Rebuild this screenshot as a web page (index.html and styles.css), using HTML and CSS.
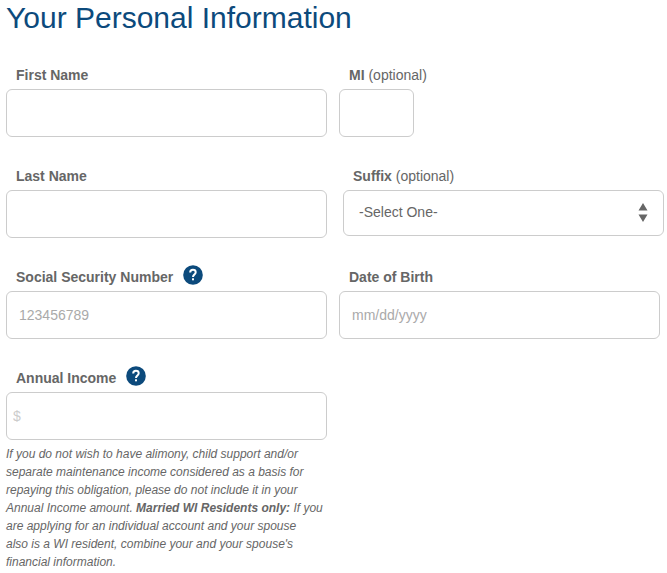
FILE: index.html
```html
<!DOCTYPE html>
<html lang="en">
<head>
    <meta charset="UTF-8">
    <meta name="viewport" content="width=device-width, initial-scale=1.0">
    <title>Your Personal Information</title>
    <link rel="stylesheet" href="styles.css">
</head>
<body>
    <h1>Your Personal Information</h1>

    <form class="form-grid">
        <div class="field">
            <div class="field-label">
                <label for="firstName">First Name</label>
            </div>
            <input type="text" id="firstName">
        </div>

        <div class="field">
            <div class="field-label">
                <label for="middleInitial">MI <span class="optional">(optional)</span></label>
            </div>
            <input type="text" id="middleInitial" class="input-short" maxlength="1">
        </div>

        <div class="field">
            <div class="field-label">
                <label for="lastName">Last Name</label>
            </div>
            <input type="text" id="lastName">
        </div>

        <div class="field field-select">
            <div class="field-label">
                <label for="suffix">Suffix <span class="optional">(optional)</span></label>
            </div>
            <div class="select-wrap">
                <select id="suffix">
                    <option>-Select One-</option>
                    <option>Jr.</option>
                    <option>Sr.</option>
                    <option>II</option>
                    <option>III</option>
                </select>
                <svg class="select-arrows" viewBox="0 0 10 20" aria-hidden="true">
                    <path d="M5 0L9.5 7.5H0.5Z M0.5 11.5H9.5L5 19Z"/>
                </svg>
            </div>
        </div>

        <div class="field">
            <div class="field-label">
                <label for="ssn">Social Security Number</label>
                <button type="button" class="help" aria-label="Help with Social Security Number">
                    <svg viewBox="0 0 20 20" aria-hidden="true">
                        <circle cx="10" cy="10" r="9.8"/>
                        <path d="M7.2 7.4C7.2 5.6 8.3 4.8 9.9 4.8C11.5 4.8 12.7 5.6 12.7 7.2C12.7 9.4 10 9.6 10 12"/>
                        <rect x="9" y="13.3" width="2" height="2"/>
                    </svg>
                </button>
            </div>
            <input type="text" id="ssn" placeholder="123456789">
        </div>

        <div class="field">
            <div class="field-label">
                <label for="birthDate">Date of Birth</label>
            </div>
            <input type="text" id="birthDate" placeholder="mm/dd/yyyy">
        </div>

        <div class="field">
            <div class="field-label">
                <label for="income">Annual Income</label>
                <button type="button" class="help" aria-label="Help with Annual Income">
                    <svg viewBox="0 0 20 20" aria-hidden="true">
                        <circle cx="10" cy="10" r="9.8"/>
                        <path d="M7.2 7.4C7.2 5.6 8.3 4.8 9.9 4.8C11.5 4.8 12.7 5.6 12.7 7.2C12.7 9.4 10 9.6 10 12"/>
                        <rect x="9" y="13.3" width="2" height="2"/>
                    </svg>
                </button>
            </div>
            <input type="text" id="income" class="input-money" placeholder="$" aria-describedby="incomeNote">
            <p class="note" id="incomeNote">If you do not wish to have alimony, child support and/or separate maintenance income considered as a basis for repaying this obligation, please do not include it in your Annual Income amount. <strong>Married WI Residents only:</strong> If you are applying for an individual account and your spouse<br> also is a WI resident, combine your and your spouse's<br> financial information.</p>
        </div>
    </form>
</body>
</html>
```

FILE: styles.css
```css
* {
    box-sizing: border-box;
}
body {
    margin: 0;
    padding: 0 7px 0 6px;
    font-family: "Liberation Sans", Arial, sans-serif;
    font-size: 14px;
    color: #666;
    background-color: #fff;
}
h1 {
    margin: 0 0 29px;
    font-size: 30px;
    font-weight: normal;
    line-height: 36px;
    color: #0c4a7c;
}
.form-grid {
    display: grid;
    grid-template-columns: 1fr 1fr;
    gap: 29px 12px;
}
.field-label {
    display: flex;
    align-items: center;
    gap: 10px;
    height: 20px;
    margin-bottom: 4px;
    padding-left: 10px;
    line-height: 20px;
}
label {
    font-weight: bold;
}
.optional {
    font-weight: normal;
}
input,
select {
    display: block;
    width: 100%;
    height: 48px;
    padding: 0 12px;
    border: 1px solid #ccc;
    border-radius: 6px;
    background-color: #fff;
    font-family: inherit;
    font-size: 14px;
    color: #666;
}
input::placeholder {
    color: #aaa;
    opacity: 1;
}
.input-short {
    width: 75px;
}
.input-money {
    padding-left: 6px;
}
.input-money::placeholder {
    color: #ccc;
}
/* the drop-down sits slightly right of the text boxes */
.field-select {
    margin: 0 -4px 0 4px;
}
.select-wrap {
    position: relative;
}
select {
    height: 46px;
    padding: 0 32px 2px 15px;
    appearance: none;
}
.select-arrows {
    position: absolute;
    top: 13px;
    right: 16px;
    width: 10px;
    height: 20px;
    fill: #666;
    pointer-events: none;
}
.help {
    width: 20px;
    height: 20px;
    margin-bottom: 4px;
    padding: 0;
    border: none;
    background: none;
    cursor: pointer;
}
.help svg {
    display: block;
    width: 20px;
    height: 20px;
}
.help circle {
    fill: #0c4a7c;
}
.help path {
    fill: none;
    stroke: #fff;
    stroke-width: 2;
}
.help rect {
    fill: #fff;
}
.note {
    margin: 5px 0 0;
    font-size: 12px;
    font-style: italic;
    line-height: 18px;
}
```
